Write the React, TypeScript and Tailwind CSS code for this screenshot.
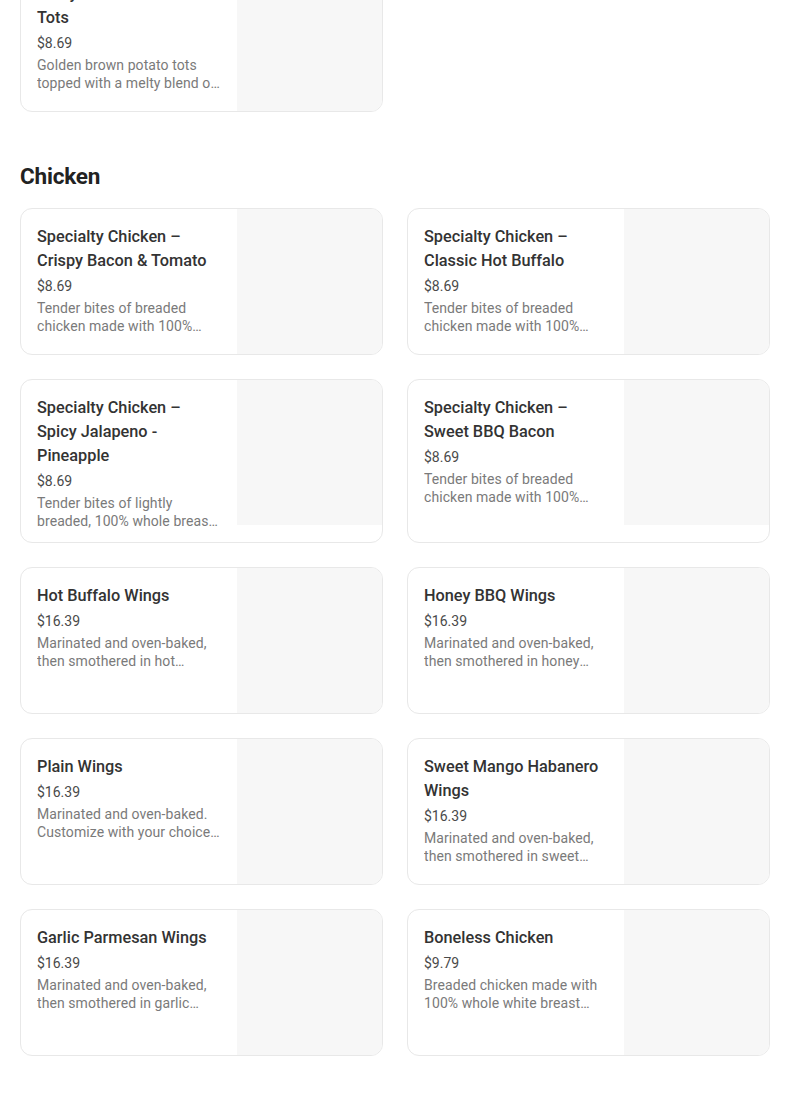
import React from "react";

type Item = { title: string; price: string; desc: string };

const top: Item = {
  title: "Melty 3-Cheese Loaded Tots",
  price: "$8.69",
  desc: "Golden brown potato tots topped with a melty blend of mozzarella, cheddar and American cheese.",
};

const chicken: Item[] = [
  { title: "Specialty Chicken – Crispy Bacon & Tomato", price: "$8.69", desc: "Tender bites of breaded chicken made with 100% whole breast white meat." },
  { title: "Specialty Chicken – Classic Hot Buffalo", price: "$8.69", desc: "Tender bites of breaded chicken made with 100% whole breast white meat." },
  { title: "Specialty Chicken – Spicy Jalapeno - Pineapple", price: "$8.69", desc: "Tender bites of lightly breaded, 100% whole breast white meat chicken." },
  { title: "Specialty Chicken – Sweet BBQ Bacon", price: "$8.69", desc: "Tender bites of breaded chicken made with 100% whole breast white meat." },
  { title: "Hot Buffalo Wings", price: "$16.39", desc: "Marinated and oven-baked, then smothered in hot buffalo sauce." },
  { title: "Honey BBQ Wings", price: "$16.39", desc: "Marinated and oven-baked, then smothered in honey BBQ sauce." },
  { title: "Plain Wings", price: "$16.39", desc: "Marinated and oven-baked. Customize with your choice of dipping sauce." },
  { title: "Sweet Mango Habanero Wings", price: "$16.39", desc: "Marinated and oven-baked, then smothered in sweet mango habanero sauce." },
  { title: "Garlic Parmesan Wings", price: "$16.39", desc: "Marinated and oven-baked, then smothered in garlic parmesan sauce." },
  { title: "Boneless Chicken", price: "$9.79", desc: "Breaded chicken made with 100% whole white breast meat." },
];

function Card({ item }: { item: Item }) {
  return (
    <div className="flex items-start overflow-hidden rounded-xl border border-[#e8e8e8] bg-white">
      <div className="flex min-w-0 flex-1 flex-col pt-4 pb-3 pl-4 pr-4">
        <div className="text-[16.3px] font-medium leading-6 text-[#333333]">{item.title}</div>
        <div className="mt-1 text-[14px] leading-[18px] text-[#4a4a4a]">{item.price}</div>
        <div className="mt-1 line-clamp-2 text-[14px] leading-[18px] tracking-[0.08px] text-[#7a7a7a]">{item.desc}</div>
      </div>
      <div className="h-[145px] w-[145px] shrink-0 bg-[#f7f7f7]" />
    </div>
  );
}

export default function App() {
  return (
    <div
      className="min-h-[1099px] bg-white px-5 pb-10"
      style={{ fontFamily: "Roboto, 'Noto Sans', sans-serif" }}
    >
      <div className="mt-[-35px] grid w-[750px] grid-cols-2 gap-6">
        <Card item={top} />
      </div>
      <h2 className="mt-12 mb-4 text-[22.5px] font-bold leading-8 tracking-[-0.2px] text-[#222222]">
        Chicken
      </h2>
      <div className="grid w-[750px] grid-cols-2 gap-6">
        {chicken.map((it) => (
          <Card key={it.title} item={it} />
        ))}
      </div>
    </div>
  );
}
